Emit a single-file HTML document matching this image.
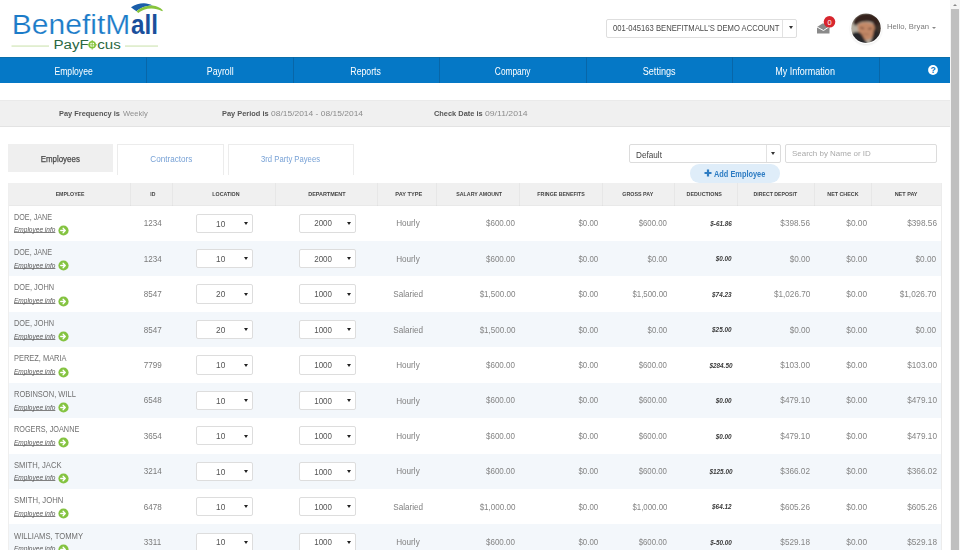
<!DOCTYPE html><html><head><meta charset="utf-8"><style>*{margin:0;padding:0;box-sizing:border-box}
html,body{width:960px;height:550px;overflow:hidden;background:#fff}
body{position:relative;font-family:"Liberation Sans",sans-serif;color:#666}
.t{position:absolute;width:0;height:0;display:flex;white-space:nowrap;line-height:1;z-index:10}
.t span{display:inline-block;flex:none}
.b{position:absolute}
#acct{position:absolute;left:605.5px;top:18.8px;width:191.5px;height:18.8px;border:1px solid #dedede;border-radius:2px;background:#fff}
#acct b{position:absolute;left:175.5px;top:0;width:1px;height:16.8px;background:#e2e2e2}
#acct i{position:absolute;left:182.5px;top:6.6px;width:0;height:0;border-left:2.2px solid transparent;border-right:2.2px solid transparent;border-top:3.2px solid #333}
#nav{position:absolute;left:0;top:56.5px;width:950px;height:26.6px;background:#0578c6;border-top:1.5px solid #0a6faa}
#nav .sp{position:absolute;top:-1px;width:1px;height:26.6px;background:#0866a8}
#pay{position:absolute;left:0;top:100px;width:950px;height:26.5px;background:#f0f0f0;border-top:1px solid #eaeaea;border-bottom:1px solid #e3e3e3}
.tabb{position:absolute;top:144px;height:27.9px}
.tabb.on{background:#efefef}
.tabb.off{border:1px solid #ececec;border-bottom:none;background:#fff;height:31px}
#dfltb{position:absolute;left:628.5px;top:144px;width:152.2px;height:19px;border:1px solid #dcdcdc;border-radius:2px;background:#fff}
#dfltb b{position:absolute;left:136.2px;top:0;width:1px;height:17px;background:#e2e2e2}
#dfltb i{position:absolute;left:141.8px;top:6.8px;border-left:2.2px solid transparent;border-right:2.2px solid transparent;border-top:3.2px solid #333}
#pill{position:absolute;left:689.7px;top:164.2px;width:90.6px;height:18.4px;border-radius:9.2px;background:#dfedf9}
#searchb{position:absolute;left:785.3px;top:144.2px;width:152.2px;height:18.6px;border:1px solid #dcdcdc;border-radius:2px;background:#fff}
.thead{position:absolute;left:8px;top:183px;width:933px;height:22.5px;background:#f0f0f0;border-bottom:1px solid #e9e9e9}
.row{position:absolute;left:8px;width:933px;background:#fff}
.row.alt{background:#f3f7fb}
.sel{position:absolute;width:57.3px;height:19.2px;border:1px solid #dddddd;border-radius:2px;background:#fff;z-index:3}
.sel i{position:absolute;left:46.8px;top:7.3px;border-left:2px solid transparent;border-right:2px solid transparent;border-top:3.2px solid #222}
.go{position:absolute;left:57.8px;z-index:4}
.vs{position:absolute;top:183px;width:1px;height:22.5px;background:rgba(0,0,0,0.035);z-index:2}
#tl{position:absolute;left:8px;top:183px;width:1px;height:367px;background:#efefef;z-index:2}
#tr{position:absolute;left:940.5px;top:183px;width:1px;height:367px;background:#ececec;z-index:2}
#sb{position:absolute;left:949.6px;top:0;width:10.4px;height:550px;background:#f4f4f4}
#sb .arr{position:absolute;left:3.3px;top:3.8px;border-left:2px solid transparent;border-right:2px solid transparent;border-bottom:2.2px solid #888}
#sb .thumb{position:absolute;left:1.3px;top:9px;width:8.2px;height:541px;background:#bfbfbf}
</style></head><body><svg class="b" style="left:0;top:0" width="170" height="56" viewBox="0 0 170 56">
<path d="M131 7.2 C135 4.5 140 3.2 144 3.3 C147 3.4 150 4.2 152.5 5.6 C146 5.6 140 8 136.5 11.2 C134.5 10 132.5 8.6 131 7.2 Z" fill="#1a5ea9"/>
<path d="M136.5 11.2 C141 7.3 147 5.6 152.5 5.6 C156.5 5.8 160 7.5 162.8 10.3 L162.3 11.2 C158.5 9.3 155 8.4 151.5 8.4 C146 8.4 141.5 10.3 138.2 13 Z" fill="#86c43c"/>
<text x="11.8" y="34.4" font-family="Liberation Sans" font-size="27.5" fill="#1b7bc8" stroke="#fff" stroke-width="0.2" textLength="118.5" lengthAdjust="spacingAndGlyphs">BenefitM</text>
<text x="131" y="34.4" font-family="Liberation Sans" font-weight="bold" font-size="27.5" fill="#1a4f9c" textLength="27" lengthAdjust="spacingAndGlyphs">all</text>
<rect x="11.5" y="45.6" width="37.5" height="0.9" fill="#c2dd9f"/>
<rect x="125" y="45.6" width="33" height="0.9" fill="#c2dd9f"/>
<text x="53.5" y="49" font-family="Liberation Sans" font-size="12.3" fill="#2b6742" textLength="67.3" lengthAdjust="spacingAndGlyphs">PayF&#160;&#160;cus</text>
<circle cx="92.2" cy="44.8" r="3" fill="none" stroke="#86c43c" stroke-width="1.6"/>
<path d="M92.2 40v9.6M87.4 44.8h9.6" stroke="#86c43c" stroke-width="0.9"/>
</svg>
<div id="acct"><b></b><i></i></div>
<svg class="b" style="left:815px;top:14px" width="24" height="22" viewBox="0 0 24 22">
<path d="M2 13 L7.5 9.5 L14.5 9.5 L14.5 19.5 L2 19.5 Z" fill="#8a8a8a"/>
<path d="M2 13 L8.5 16.5 L14.5 12.5" stroke="#fff" stroke-width="1" fill="none"/>
<circle cx="14.5" cy="7.8" r="5.8" fill="#d7262e"/>
<text x="14.5" y="10.6" font-family="Liberation Sans" font-size="7.5" fill="#fff" text-anchor="middle">0</text>
</svg>
<svg class="b" style="left:849px;top:11px" width="34" height="36" viewBox="0 0 34 36">
<defs><clipPath id="ac"><circle cx="17" cy="17.2" r="14.7"/></clipPath>
<filter id="sh" x="-30%" y="-30%" width="160%" height="160%"><feGaussianBlur stdDeviation="0.9"/></filter>
<filter id="bl" x="-10%" y="-10%" width="120%" height="120%"><feGaussianBlur stdDeviation="0.8"/></filter></defs>
<circle cx="17" cy="18.3" r="15.6" fill="#000" opacity="0.10" filter="url(#sh)"/>
<circle cx="17" cy="17.2" r="15.9" fill="#fff"/>
<g clip-path="url(#ac)"><g filter="url(#bl)">
<rect x="0" y="0" width="34" height="36" fill="#b4ada0"/>
<path d="M24 5 L34 5 L34 36 L24 36 Z" fill="#3c302c"/>
<path d="M4 12 C5 5 11 2 18 2 C25 2 29 5 30 10 L28.5 15 C25 11 19 9.5 13 11 C10 12 8 13.5 6.5 15 Z" fill="#35241c"/>
<path d="M8.5 14 C12 11 19 10.5 25 14 L26 19 C25.5 24 22.5 28.5 18 29 C13.5 28.5 10.5 24 9 19 Z" fill="#c28866"/>
<path d="M11 16.5 L15 17.6 M19 17.8 L23 17.4" stroke="#6a4434" stroke-width="1.2"/>
<path d="M14 22.5 C16 23.5 18 23.8 20 23" stroke="#9a6650" stroke-width="0.9" fill="none"/>
<path d="M1 36 L2 24 C5 20 9.5 20 12.5 23 C14.5 26 16 29.5 18 31.5 L20 36 Z" fill="#26252a"/>
<path d="M25 18 C28 20 31 23 33 27 L33 36 L18 36 C22 32 24 25 25 18 Z" fill="#2b2727"/>
</g></g>
</svg>
<div class="b" style="left:932.3px;top:27.2px;border-left:2.2px solid transparent;border-right:2.2px solid transparent;border-top:2.4px solid #888"></div>
<div id="nav">
<div class="sp" style="left:146px"></div>
<div class="sp" style="left:292.5px"></div>
<div class="sp" style="left:439px"></div>
<div class="sp" style="left:585.5px"></div>
<div class="sp" style="left:732px"></div>
<div class="sp" style="left:879px"></div>
<svg style="position:absolute;left:928.2px;top:7.4px" width="10" height="10" viewBox="0 0 10 10"><circle cx="5" cy="5" r="4.9" fill="#fff"/><text x="5.1" y="8.3" font-family="Liberation Sans" font-weight="bold" font-size="8.6" fill="#0578c6" text-anchor="middle">?</text></svg>
</div>
<div id="pay"></div>
<div class="tabb on" style="left:8px;width:105px"></div>
<div class="tabb off" style="left:117px;width:107px"></div>
<div class="tabb off" style="left:228px;width:125.5px"></div>
<div id="dfltb"><b></b><i></i></div>
<div id="pill"></div>
<svg class="b" style="left:703.5px;top:168.7px;z-index:11" width="8" height="8" viewBox="0 0 8 8"><path d="M4 0.5v7M0.5 4h7" stroke="#2d7cc3" stroke-width="2.2"/></svg>
<div id="searchb"></div>
<div class="thead"></div>
<div id="tl"></div><div id="tr"></div>
<div id="sb"><div class="arr"></div><div class="thumb"></div></div>
<div class="row" style="top:205.50px;height:35.64px"></div><div class="row alt" style="top:240.94px;height:35.64px"></div><div class="row" style="top:276.38px;height:35.64px"></div><div class="row alt" style="top:311.82px;height:35.64px"></div><div class="row" style="top:347.26px;height:35.64px"></div><div class="row alt" style="top:382.70px;height:35.64px"></div><div class="row" style="top:418.14px;height:35.64px"></div><div class="row alt" style="top:453.58px;height:35.64px"></div><div class="row" style="top:489.02px;height:35.64px"></div><div class="row alt" style="top:524.46px;height:35.64px"></div><div class="sel" style="left:196.2px;top:213.60px"><i></i></div><div class="sel" style="left:299.2px;top:213.60px"><i></i></div><svg class="go" style="top:224.80px" width="11" height="11" viewBox="0 0 22 22"><circle cx="11" cy="11" r="10.2" fill="#84c341"/><path d="M5.5 11h8.8M10.2 6.6l4.4 4.4-4.4 4.4" stroke="#fff" stroke-width="2.6" fill="none" stroke-linecap="round" stroke-linejoin="round"/></svg><div class="sel" style="left:196.2px;top:249.04px"><i></i></div><div class="sel" style="left:299.2px;top:249.04px"><i></i></div><svg class="go" style="top:260.24px" width="11" height="11" viewBox="0 0 22 22"><circle cx="11" cy="11" r="10.2" fill="#84c341"/><path d="M5.5 11h8.8M10.2 6.6l4.4 4.4-4.4 4.4" stroke="#fff" stroke-width="2.6" fill="none" stroke-linecap="round" stroke-linejoin="round"/></svg><div class="sel" style="left:196.2px;top:284.48px"><i></i></div><div class="sel" style="left:299.2px;top:284.48px"><i></i></div><svg class="go" style="top:295.68px" width="11" height="11" viewBox="0 0 22 22"><circle cx="11" cy="11" r="10.2" fill="#84c341"/><path d="M5.5 11h8.8M10.2 6.6l4.4 4.4-4.4 4.4" stroke="#fff" stroke-width="2.6" fill="none" stroke-linecap="round" stroke-linejoin="round"/></svg><div class="sel" style="left:196.2px;top:319.92px"><i></i></div><div class="sel" style="left:299.2px;top:319.92px"><i></i></div><svg class="go" style="top:331.12px" width="11" height="11" viewBox="0 0 22 22"><circle cx="11" cy="11" r="10.2" fill="#84c341"/><path d="M5.5 11h8.8M10.2 6.6l4.4 4.4-4.4 4.4" stroke="#fff" stroke-width="2.6" fill="none" stroke-linecap="round" stroke-linejoin="round"/></svg><div class="sel" style="left:196.2px;top:355.36px"><i></i></div><div class="sel" style="left:299.2px;top:355.36px"><i></i></div><svg class="go" style="top:366.56px" width="11" height="11" viewBox="0 0 22 22"><circle cx="11" cy="11" r="10.2" fill="#84c341"/><path d="M5.5 11h8.8M10.2 6.6l4.4 4.4-4.4 4.4" stroke="#fff" stroke-width="2.6" fill="none" stroke-linecap="round" stroke-linejoin="round"/></svg><div class="sel" style="left:196.2px;top:390.80px"><i></i></div><div class="sel" style="left:299.2px;top:390.80px"><i></i></div><svg class="go" style="top:402.00px" width="11" height="11" viewBox="0 0 22 22"><circle cx="11" cy="11" r="10.2" fill="#84c341"/><path d="M5.5 11h8.8M10.2 6.6l4.4 4.4-4.4 4.4" stroke="#fff" stroke-width="2.6" fill="none" stroke-linecap="round" stroke-linejoin="round"/></svg><div class="sel" style="left:196.2px;top:426.24px"><i></i></div><div class="sel" style="left:299.2px;top:426.24px"><i></i></div><svg class="go" style="top:437.44px" width="11" height="11" viewBox="0 0 22 22"><circle cx="11" cy="11" r="10.2" fill="#84c341"/><path d="M5.5 11h8.8M10.2 6.6l4.4 4.4-4.4 4.4" stroke="#fff" stroke-width="2.6" fill="none" stroke-linecap="round" stroke-linejoin="round"/></svg><div class="sel" style="left:196.2px;top:461.68px"><i></i></div><div class="sel" style="left:299.2px;top:461.68px"><i></i></div><svg class="go" style="top:472.88px" width="11" height="11" viewBox="0 0 22 22"><circle cx="11" cy="11" r="10.2" fill="#84c341"/><path d="M5.5 11h8.8M10.2 6.6l4.4 4.4-4.4 4.4" stroke="#fff" stroke-width="2.6" fill="none" stroke-linecap="round" stroke-linejoin="round"/></svg><div class="sel" style="left:196.2px;top:497.12px"><i></i></div><div class="sel" style="left:299.2px;top:497.12px"><i></i></div><svg class="go" style="top:508.32px" width="11" height="11" viewBox="0 0 22 22"><circle cx="11" cy="11" r="10.2" fill="#84c341"/><path d="M5.5 11h8.8M10.2 6.6l4.4 4.4-4.4 4.4" stroke="#fff" stroke-width="2.6" fill="none" stroke-linecap="round" stroke-linejoin="round"/></svg><div class="sel" style="left:196.2px;top:532.56px"><i></i></div><div class="sel" style="left:299.2px;top:532.56px"><i></i></div><svg class="go" style="top:543.76px" width="11" height="11" viewBox="0 0 22 22"><circle cx="11" cy="11" r="10.2" fill="#84c341"/><path d="M5.5 11h8.8M10.2 6.6l4.4 4.4-4.4 4.4" stroke="#fff" stroke-width="2.6" fill="none" stroke-linecap="round" stroke-linejoin="round"/></svg><div class="vs" style="left:129.5px"></div><div class="vs" style="left:172.0px"></div><div class="vs" style="left:274.5px"></div><div class="vs" style="left:377.0px"></div><div class="vs" style="left:435.5px"></div><div class="vs" style="left:518.5px"></div><div class="vs" style="left:602.0px"></div><div class="vs" style="left:673.5px"></div><div class="vs" style="left:736.5px"></div><div class="vs" style="left:813.5px"></div><div class="vs" style="left:870.5px"></div><div class="t" style="left:612.50px;top:24.20px;font-size:8.80px;color:#4a4a4a;justify-content:flex-start;"><span style="transform:scaleX(0.8696);transform-origin:left">001-045163 BENEFITMALL&#x27;S DEMO ACCOUNT</span></div><div class="t" style="left:887.42px;top:23.29px;font-size:7.90px;color:#7a7a7a;justify-content:flex-start;"><span style="transform:scaleX(0.9763);transform-origin:left">Hello, Bryan</span></div><div class="t" style="left:73.25px;top:65.64px;font-size:10.61px;color:#fff;justify-content:center;"><span style="transform:scaleX(0.8104);transform-origin:center">Employee</span></div><div class="t" style="left:219.90px;top:65.64px;font-size:10.61px;color:#fff;justify-content:center;"><span style="transform:scaleX(0.8293);transform-origin:center">Payroll</span></div><div class="t" style="left:365.90px;top:65.64px;font-size:10.61px;color:#fff;justify-content:center;"><span style="transform:scaleX(0.8189);transform-origin:center">Reports</span></div><div class="t" style="left:513.00px;top:65.64px;font-size:10.61px;color:#fff;justify-content:center;"><span style="transform:scaleX(0.7854);transform-origin:center">Company</span></div><div class="t" style="left:659.50px;top:65.64px;font-size:10.61px;color:#fff;justify-content:center;"><span style="transform:scaleX(0.8586);transform-origin:center">Settings</span></div><div class="t" style="left:805.50px;top:65.64px;font-size:10.61px;color:#fff;justify-content:center;"><span style="transform:scaleX(0.8498);transform-origin:center">My Information</span></div><div class="t" style="left:59.08px;top:109.68px;font-size:7.99px;color:#555;justify-content:flex-start;font-weight:bold;"><span style="transform:scaleX(0.9270);transform-origin:left">Pay Frequency is</span></div><div class="t" style="left:122.58px;top:109.75px;font-size:7.59px;color:#909090;justify-content:flex-start;"><span style="transform:scaleX(1.0049);transform-origin:left">Weekly</span></div><div class="t" style="left:221.92px;top:109.68px;font-size:7.99px;color:#555;justify-content:flex-start;font-weight:bold;"><span style="transform:scaleX(0.9285);transform-origin:left">Pay Period is</span></div><div class="t" style="left:270.58px;top:109.72px;font-size:7.77px;color:#8c8c8c;justify-content:flex-start;"><span style="transform:scaleX(1.0874);transform-origin:left">08/15/2014 - 08/15/2014</span></div><div class="t" style="left:433.96px;top:109.68px;font-size:7.99px;color:#555;justify-content:flex-start;font-weight:bold;"><span style="transform:scaleX(0.9275);transform-origin:left">Check Date is</span></div><div class="t" style="left:485.04px;top:109.72px;font-size:7.77px;color:#8c8c8c;justify-content:flex-start;"><span style="transform:scaleX(1.1118);transform-origin:left">09/11/2014</span></div><div class="t" style="left:60.62px;top:155.30px;font-size:9.01px;color:#4a4a4a;justify-content:center;-webkit-text-stroke:0.25px #4a4a4a;"><span style="transform:scaleX(0.8800);transform-origin:center">Employees</span></div><div class="t" style="left:170.87px;top:155.30px;font-size:9.01px;color:#78a2d6;justify-content:center;"><span style="transform:scaleX(0.9021);transform-origin:center">Contractors</span></div><div class="t" style="left:290.23px;top:155.30px;font-size:9.01px;color:#78a2d6;justify-content:center;"><span style="transform:scaleX(0.8541);transform-origin:center">3rd Party Payees</span></div><div class="t" style="left:635.92px;top:150.53px;font-size:8.43px;color:#444;justify-content:flex-start;"><span style="transform:scaleX(0.9714);transform-origin:left">Default</span></div><div class="t" style="left:714.08px;top:171.03px;font-size:8.28px;color:#2d7cc3;justify-content:flex-start;font-weight:bold;"><span style="transform:scaleX(0.8941);transform-origin:left">Add Employee</span></div><div class="t" style="left:791.78px;top:150.10px;font-size:8.00px;color:#aaa;justify-content:flex-start;"><span style="transform:scaleX(0.9958);transform-origin:left">Search by Name or ID</span></div><div class="t" style="left:70.19px;top:191.83px;font-size:5.81px;color:#444;justify-content:center;font-weight:bold;"><span style="transform:scaleX(0.8975);transform-origin:center">EMPLOYEE</span></div><div class="t" style="left:152.50px;top:191.83px;font-size:5.81px;color:#444;justify-content:center;font-weight:bold;"><span style="transform:scaleX(0.8800);transform-origin:center">ID</span></div><div class="t" style="left:225.53px;top:191.83px;font-size:5.81px;color:#444;justify-content:center;font-weight:bold;"><span style="transform:scaleX(0.9153);transform-origin:center">LOCATION</span></div><div class="t" style="left:327.23px;top:191.83px;font-size:5.81px;color:#444;justify-content:center;font-weight:bold;"><span style="transform:scaleX(0.9403);transform-origin:center">DEPARTMENT</span></div><div class="t" style="left:408.89px;top:191.83px;font-size:5.81px;color:#444;justify-content:center;font-weight:bold;"><span style="transform:scaleX(0.9736);transform-origin:center">PAY TYPE</span></div><div class="t" style="left:479.27px;top:191.83px;font-size:5.81px;color:#444;justify-content:center;font-weight:bold;"><span style="transform:scaleX(0.9088);transform-origin:center">SALARY AMOUNT</span></div><div class="t" style="left:561.58px;top:191.83px;font-size:5.81px;color:#444;justify-content:center;font-weight:bold;"><span style="transform:scaleX(0.9100);transform-origin:center">FRINGE BENEFITS</span></div><div class="t" style="left:637.96px;top:191.83px;font-size:5.81px;color:#444;justify-content:center;font-weight:bold;"><span style="transform:scaleX(0.9228);transform-origin:center">GROSS PAY</span></div><div class="t" style="left:704.42px;top:191.83px;font-size:5.81px;color:#444;justify-content:center;font-weight:bold;"><span style="transform:scaleX(0.9196);transform-origin:center">DEDUCTIONS</span></div><div class="t" style="left:775.39px;top:191.83px;font-size:5.81px;color:#444;justify-content:center;font-weight:bold;"><span style="transform:scaleX(0.8976);transform-origin:center">DIRECT DEPOSIT</span></div><div class="t" style="left:843.21px;top:191.83px;font-size:5.81px;color:#444;justify-content:center;font-weight:bold;"><span style="transform:scaleX(0.9254);transform-origin:center">NET CHECK</span></div><div class="t" style="left:906.15px;top:191.83px;font-size:5.81px;color:#444;justify-content:center;font-weight:bold;"><span style="transform:scaleX(0.9454);transform-origin:center">NET PAY</span></div><div class="t" style="left:14.00px;top:212.60px;font-size:8.72px;color:#707070;justify-content:flex-start;"><span style="transform:scaleX(0.8272);transform-origin:left">DOE, JANE</span></div><div class="t" style="left:152.92px;top:219.20px;font-size:8.85px;color:#7a7a7a;justify-content:center;"><span style="transform:scaleX(0.9132);transform-origin:center">1234</span></div><div class="t" style="left:220.90px;top:219.51px;font-size:8.33px;color:#555;justify-content:center;"><span style="transform:scaleX(0.9972);transform-origin:center">10</span></div><div class="t" style="left:323.12px;top:220.45px;font-size:8.19px;color:#555;justify-content:center;"><span style="transform:scaleX(0.9775);transform-origin:center">2000</span></div><div class="t" style="left:408.14px;top:220.36px;font-size:8.28px;color:#808080;justify-content:center;"><span style="transform:scaleX(0.9841);transform-origin:center">Hourly</span></div><div class="t" style="left:514.92px;top:219.20px;font-size:8.85px;color:#858585;justify-content:flex-end;"><span style="transform:scaleX(0.9077);transform-origin:right">$600.00</span></div><div class="t" style="left:598.00px;top:219.20px;font-size:8.85px;color:#858585;justify-content:flex-end;"><span style="transform:scaleX(0.8901);transform-origin:right">$0.00</span></div><div class="t" style="left:667.00px;top:219.20px;font-size:8.85px;color:#858585;justify-content:flex-end;"><span style="transform:scaleX(0.8862);transform-origin:right">$600.00</span></div><div class="t" style="left:732.04px;top:219.87px;font-size:7.06px;color:#3a3a3a;justify-content:flex-end;font-weight:bold;font-style:italic;"><span style="transform:scaleX(0.9046);transform-origin:right">$-61.86</span></div><div class="t" style="left:810.00px;top:219.20px;font-size:8.85px;color:#858585;justify-content:flex-end;"><span style="transform:scaleX(0.9260);transform-origin:right">$398.56</span></div><div class="t" style="left:867.00px;top:219.20px;font-size:8.85px;color:#858585;justify-content:flex-end;"><span style="transform:scaleX(0.9438);transform-origin:right">$0.00</span></div><div class="t" style="left:936.50px;top:219.20px;font-size:8.85px;color:#858585;justify-content:flex-end;"><span style="transform:scaleX(0.9320);transform-origin:right">$398.56</span></div><div class="t" style="left:13.60px;top:227.40px;font-size:6.90px;color:#5a5a5a;justify-content:flex-start;font-style:italic;text-decoration:underline;text-decoration-skip-ink:none;text-decoration-thickness:0.7px;text-decoration-color:#808080;text-underline-offset:0px;"><span style="transform:scaleX(0.9467);transform-origin:left">Employee info</span></div><div class="t" style="left:14.00px;top:248.04px;font-size:8.72px;color:#707070;justify-content:flex-start;"><span style="transform:scaleX(0.8272);transform-origin:left">DOE, JANE</span></div><div class="t" style="left:152.92px;top:254.64px;font-size:8.85px;color:#7a7a7a;justify-content:center;"><span style="transform:scaleX(0.9132);transform-origin:center">1234</span></div><div class="t" style="left:220.90px;top:254.95px;font-size:8.33px;color:#555;justify-content:center;"><span style="transform:scaleX(0.9972);transform-origin:center">10</span></div><div class="t" style="left:323.12px;top:255.89px;font-size:8.19px;color:#555;justify-content:center;"><span style="transform:scaleX(0.9775);transform-origin:center">2000</span></div><div class="t" style="left:408.14px;top:255.80px;font-size:8.28px;color:#808080;justify-content:center;"><span style="transform:scaleX(0.9841);transform-origin:center">Hourly</span></div><div class="t" style="left:514.92px;top:254.64px;font-size:8.85px;color:#858585;justify-content:flex-end;"><span style="transform:scaleX(0.9077);transform-origin:right">$600.00</span></div><div class="t" style="left:598.00px;top:254.64px;font-size:8.85px;color:#858585;justify-content:flex-end;"><span style="transform:scaleX(0.8901);transform-origin:right">$0.00</span></div><div class="t" style="left:667.00px;top:254.64px;font-size:8.85px;color:#858585;justify-content:flex-end;"><span style="transform:scaleX(0.8862);transform-origin:right">$0.00</span></div><div class="t" style="left:732.04px;top:255.31px;font-size:7.06px;color:#3a3a3a;justify-content:flex-end;font-weight:bold;font-style:italic;"><span style="transform:scaleX(0.9046);transform-origin:right">$0.00</span></div><div class="t" style="left:810.00px;top:254.64px;font-size:8.85px;color:#858585;justify-content:flex-end;"><span style="transform:scaleX(0.9260);transform-origin:right">$0.00</span></div><div class="t" style="left:867.00px;top:254.64px;font-size:8.85px;color:#858585;justify-content:flex-end;"><span style="transform:scaleX(0.9438);transform-origin:right">$0.00</span></div><div class="t" style="left:936.50px;top:254.64px;font-size:8.85px;color:#858585;justify-content:flex-end;"><span style="transform:scaleX(0.9320);transform-origin:right">$0.00</span></div><div class="t" style="left:13.60px;top:262.84px;font-size:6.90px;color:#5a5a5a;justify-content:flex-start;font-style:italic;text-decoration:underline;text-decoration-skip-ink:none;text-decoration-thickness:0.7px;text-decoration-color:#808080;text-underline-offset:0px;"><span style="transform:scaleX(0.9467);transform-origin:left">Employee info</span></div><div class="t" style="left:14.00px;top:283.48px;font-size:8.72px;color:#707070;justify-content:flex-start;"><span style="transform:scaleX(0.8456);transform-origin:left">DOE, JOHN</span></div><div class="t" style="left:152.92px;top:290.08px;font-size:8.85px;color:#7a7a7a;justify-content:center;"><span style="transform:scaleX(0.9132);transform-origin:center">8547</span></div><div class="t" style="left:220.90px;top:290.39px;font-size:8.33px;color:#555;justify-content:center;"><span style="transform:scaleX(0.9972);transform-origin:center">20</span></div><div class="t" style="left:323.12px;top:291.33px;font-size:8.19px;color:#555;justify-content:center;"><span style="transform:scaleX(0.9775);transform-origin:center">1000</span></div><div class="t" style="left:408.14px;top:291.24px;font-size:8.28px;color:#808080;justify-content:center;"><span style="transform:scaleX(0.9841);transform-origin:center">Salaried</span></div><div class="t" style="left:514.92px;top:290.08px;font-size:8.85px;color:#858585;justify-content:flex-end;"><span style="transform:scaleX(0.9077);transform-origin:right">$1,500.00</span></div><div class="t" style="left:598.00px;top:290.08px;font-size:8.85px;color:#858585;justify-content:flex-end;"><span style="transform:scaleX(0.8901);transform-origin:right">$0.00</span></div><div class="t" style="left:667.00px;top:290.08px;font-size:8.85px;color:#858585;justify-content:flex-end;"><span style="transform:scaleX(0.8862);transform-origin:right">$1,500.00</span></div><div class="t" style="left:732.04px;top:290.75px;font-size:7.06px;color:#3a3a3a;justify-content:flex-end;font-weight:bold;font-style:italic;"><span style="transform:scaleX(0.9046);transform-origin:right">$74.23</span></div><div class="t" style="left:810.00px;top:290.08px;font-size:8.85px;color:#858585;justify-content:flex-end;"><span style="transform:scaleX(0.9260);transform-origin:right">$1,026.70</span></div><div class="t" style="left:867.00px;top:290.08px;font-size:8.85px;color:#858585;justify-content:flex-end;"><span style="transform:scaleX(0.9438);transform-origin:right">$0.00</span></div><div class="t" style="left:936.50px;top:290.08px;font-size:8.85px;color:#858585;justify-content:flex-end;"><span style="transform:scaleX(0.9320);transform-origin:right">$1,026.70</span></div><div class="t" style="left:13.60px;top:298.28px;font-size:6.90px;color:#5a5a5a;justify-content:flex-start;font-style:italic;text-decoration:underline;text-decoration-skip-ink:none;text-decoration-thickness:0.7px;text-decoration-color:#808080;text-underline-offset:0px;"><span style="transform:scaleX(0.9467);transform-origin:left">Employee info</span></div><div class="t" style="left:14.00px;top:318.92px;font-size:8.72px;color:#707070;justify-content:flex-start;"><span style="transform:scaleX(0.8456);transform-origin:left">DOE, JOHN</span></div><div class="t" style="left:152.92px;top:325.52px;font-size:8.85px;color:#7a7a7a;justify-content:center;"><span style="transform:scaleX(0.9132);transform-origin:center">8547</span></div><div class="t" style="left:220.90px;top:325.83px;font-size:8.33px;color:#555;justify-content:center;"><span style="transform:scaleX(0.9972);transform-origin:center">20</span></div><div class="t" style="left:323.12px;top:326.77px;font-size:8.19px;color:#555;justify-content:center;"><span style="transform:scaleX(0.9775);transform-origin:center">1000</span></div><div class="t" style="left:408.14px;top:326.68px;font-size:8.28px;color:#808080;justify-content:center;"><span style="transform:scaleX(0.9841);transform-origin:center">Salaried</span></div><div class="t" style="left:514.92px;top:325.52px;font-size:8.85px;color:#858585;justify-content:flex-end;"><span style="transform:scaleX(0.9077);transform-origin:right">$1,500.00</span></div><div class="t" style="left:598.00px;top:325.52px;font-size:8.85px;color:#858585;justify-content:flex-end;"><span style="transform:scaleX(0.8901);transform-origin:right">$0.00</span></div><div class="t" style="left:667.00px;top:325.52px;font-size:8.85px;color:#858585;justify-content:flex-end;"><span style="transform:scaleX(0.8862);transform-origin:right">$0.00</span></div><div class="t" style="left:732.04px;top:326.19px;font-size:7.06px;color:#3a3a3a;justify-content:flex-end;font-weight:bold;font-style:italic;"><span style="transform:scaleX(0.9046);transform-origin:right">$25.00</span></div><div class="t" style="left:810.00px;top:325.52px;font-size:8.85px;color:#858585;justify-content:flex-end;"><span style="transform:scaleX(0.9260);transform-origin:right">$0.00</span></div><div class="t" style="left:867.00px;top:325.52px;font-size:8.85px;color:#858585;justify-content:flex-end;"><span style="transform:scaleX(0.9438);transform-origin:right">$0.00</span></div><div class="t" style="left:936.50px;top:325.52px;font-size:8.85px;color:#858585;justify-content:flex-end;"><span style="transform:scaleX(0.9320);transform-origin:right">$0.00</span></div><div class="t" style="left:13.60px;top:333.72px;font-size:6.90px;color:#5a5a5a;justify-content:flex-start;font-style:italic;text-decoration:underline;text-decoration-skip-ink:none;text-decoration-thickness:0.7px;text-decoration-color:#808080;text-underline-offset:0px;"><span style="transform:scaleX(0.9467);transform-origin:left">Employee info</span></div><div class="t" style="left:14.00px;top:354.36px;font-size:8.72px;color:#707070;justify-content:flex-start;"><span style="transform:scaleX(0.8534);transform-origin:left">PEREZ, MARIA</span></div><div class="t" style="left:152.92px;top:360.96px;font-size:8.85px;color:#7a7a7a;justify-content:center;"><span style="transform:scaleX(0.9132);transform-origin:center">7799</span></div><div class="t" style="left:220.90px;top:361.27px;font-size:8.33px;color:#555;justify-content:center;"><span style="transform:scaleX(0.9972);transform-origin:center">10</span></div><div class="t" style="left:323.12px;top:362.21px;font-size:8.19px;color:#555;justify-content:center;"><span style="transform:scaleX(0.9775);transform-origin:center">1000</span></div><div class="t" style="left:408.14px;top:362.12px;font-size:8.28px;color:#808080;justify-content:center;"><span style="transform:scaleX(0.9841);transform-origin:center">Hourly</span></div><div class="t" style="left:514.92px;top:360.96px;font-size:8.85px;color:#858585;justify-content:flex-end;"><span style="transform:scaleX(0.9077);transform-origin:right">$600.00</span></div><div class="t" style="left:598.00px;top:360.96px;font-size:8.85px;color:#858585;justify-content:flex-end;"><span style="transform:scaleX(0.8901);transform-origin:right">$0.00</span></div><div class="t" style="left:667.00px;top:360.96px;font-size:8.85px;color:#858585;justify-content:flex-end;"><span style="transform:scaleX(0.8862);transform-origin:right">$600.00</span></div><div class="t" style="left:732.04px;top:361.63px;font-size:7.06px;color:#3a3a3a;justify-content:flex-end;font-weight:bold;font-style:italic;"><span style="transform:scaleX(0.9046);transform-origin:right">$284.50</span></div><div class="t" style="left:810.00px;top:360.96px;font-size:8.85px;color:#858585;justify-content:flex-end;"><span style="transform:scaleX(0.9260);transform-origin:right">$103.00</span></div><div class="t" style="left:867.00px;top:360.96px;font-size:8.85px;color:#858585;justify-content:flex-end;"><span style="transform:scaleX(0.9438);transform-origin:right">$0.00</span></div><div class="t" style="left:936.50px;top:360.96px;font-size:8.85px;color:#858585;justify-content:flex-end;"><span style="transform:scaleX(0.9320);transform-origin:right">$103.00</span></div><div class="t" style="left:13.60px;top:369.16px;font-size:6.90px;color:#5a5a5a;justify-content:flex-start;font-style:italic;text-decoration:underline;text-decoration-skip-ink:none;text-decoration-thickness:0.7px;text-decoration-color:#808080;text-underline-offset:0px;"><span style="transform:scaleX(0.9467);transform-origin:left">Employee info</span></div><div class="t" style="left:14.00px;top:389.80px;font-size:8.72px;color:#707070;justify-content:flex-start;"><span style="transform:scaleX(0.8634);transform-origin:left">ROBINSON, WILL</span></div><div class="t" style="left:152.92px;top:396.40px;font-size:8.85px;color:#7a7a7a;justify-content:center;"><span style="transform:scaleX(0.9132);transform-origin:center">6548</span></div><div class="t" style="left:220.90px;top:396.71px;font-size:8.33px;color:#555;justify-content:center;"><span style="transform:scaleX(0.9972);transform-origin:center">10</span></div><div class="t" style="left:323.12px;top:397.65px;font-size:8.19px;color:#555;justify-content:center;"><span style="transform:scaleX(0.9775);transform-origin:center">1000</span></div><div class="t" style="left:408.14px;top:397.56px;font-size:8.28px;color:#808080;justify-content:center;"><span style="transform:scaleX(0.9841);transform-origin:center">Hourly</span></div><div class="t" style="left:514.92px;top:396.40px;font-size:8.85px;color:#858585;justify-content:flex-end;"><span style="transform:scaleX(0.9077);transform-origin:right">$600.00</span></div><div class="t" style="left:598.00px;top:396.40px;font-size:8.85px;color:#858585;justify-content:flex-end;"><span style="transform:scaleX(0.8901);transform-origin:right">$0.00</span></div><div class="t" style="left:667.00px;top:396.40px;font-size:8.85px;color:#858585;justify-content:flex-end;"><span style="transform:scaleX(0.8862);transform-origin:right">$600.00</span></div><div class="t" style="left:732.04px;top:397.07px;font-size:7.06px;color:#3a3a3a;justify-content:flex-end;font-weight:bold;font-style:italic;"><span style="transform:scaleX(0.9046);transform-origin:right">$0.00</span></div><div class="t" style="left:810.00px;top:396.40px;font-size:8.85px;color:#858585;justify-content:flex-end;"><span style="transform:scaleX(0.9260);transform-origin:right">$479.10</span></div><div class="t" style="left:867.00px;top:396.40px;font-size:8.85px;color:#858585;justify-content:flex-end;"><span style="transform:scaleX(0.9438);transform-origin:right">$0.00</span></div><div class="t" style="left:936.50px;top:396.40px;font-size:8.85px;color:#858585;justify-content:flex-end;"><span style="transform:scaleX(0.9320);transform-origin:right">$479.10</span></div><div class="t" style="left:13.60px;top:404.60px;font-size:6.90px;color:#5a5a5a;justify-content:flex-start;font-style:italic;text-decoration:underline;text-decoration-skip-ink:none;text-decoration-thickness:0.7px;text-decoration-color:#808080;text-underline-offset:0px;"><span style="transform:scaleX(0.9467);transform-origin:left">Employee info</span></div><div class="t" style="left:14.00px;top:425.24px;font-size:8.72px;color:#707070;justify-content:flex-start;"><span style="transform:scaleX(0.8369);transform-origin:left">ROGERS, JOANNE</span></div><div class="t" style="left:152.92px;top:431.84px;font-size:8.85px;color:#7a7a7a;justify-content:center;"><span style="transform:scaleX(0.9132);transform-origin:center">3654</span></div><div class="t" style="left:220.90px;top:432.15px;font-size:8.33px;color:#555;justify-content:center;"><span style="transform:scaleX(0.9972);transform-origin:center">10</span></div><div class="t" style="left:323.12px;top:433.09px;font-size:8.19px;color:#555;justify-content:center;"><span style="transform:scaleX(0.9775);transform-origin:center">1000</span></div><div class="t" style="left:408.14px;top:433.00px;font-size:8.28px;color:#808080;justify-content:center;"><span style="transform:scaleX(0.9841);transform-origin:center">Hourly</span></div><div class="t" style="left:514.92px;top:431.84px;font-size:8.85px;color:#858585;justify-content:flex-end;"><span style="transform:scaleX(0.9077);transform-origin:right">$600.00</span></div><div class="t" style="left:598.00px;top:431.84px;font-size:8.85px;color:#858585;justify-content:flex-end;"><span style="transform:scaleX(0.8901);transform-origin:right">$0.00</span></div><div class="t" style="left:667.00px;top:431.84px;font-size:8.85px;color:#858585;justify-content:flex-end;"><span style="transform:scaleX(0.8862);transform-origin:right">$600.00</span></div><div class="t" style="left:732.04px;top:432.51px;font-size:7.06px;color:#3a3a3a;justify-content:flex-end;font-weight:bold;font-style:italic;"><span style="transform:scaleX(0.9046);transform-origin:right">$0.00</span></div><div class="t" style="left:810.00px;top:431.84px;font-size:8.85px;color:#858585;justify-content:flex-end;"><span style="transform:scaleX(0.9260);transform-origin:right">$479.10</span></div><div class="t" style="left:867.00px;top:431.84px;font-size:8.85px;color:#858585;justify-content:flex-end;"><span style="transform:scaleX(0.9438);transform-origin:right">$0.00</span></div><div class="t" style="left:936.50px;top:431.84px;font-size:8.85px;color:#858585;justify-content:flex-end;"><span style="transform:scaleX(0.9320);transform-origin:right">$479.10</span></div><div class="t" style="left:13.60px;top:440.04px;font-size:6.90px;color:#5a5a5a;justify-content:flex-start;font-style:italic;text-decoration:underline;text-decoration-skip-ink:none;text-decoration-thickness:0.7px;text-decoration-color:#808080;text-underline-offset:0px;"><span style="transform:scaleX(0.9467);transform-origin:left">Employee info</span></div><div class="t" style="left:14.00px;top:460.68px;font-size:8.72px;color:#707070;justify-content:flex-start;"><span style="transform:scaleX(0.8770);transform-origin:left">SMITH, JACK</span></div><div class="t" style="left:152.92px;top:467.28px;font-size:8.85px;color:#7a7a7a;justify-content:center;"><span style="transform:scaleX(0.9132);transform-origin:center">3214</span></div><div class="t" style="left:220.90px;top:467.59px;font-size:8.33px;color:#555;justify-content:center;"><span style="transform:scaleX(0.9972);transform-origin:center">10</span></div><div class="t" style="left:323.12px;top:468.53px;font-size:8.19px;color:#555;justify-content:center;"><span style="transform:scaleX(0.9775);transform-origin:center">1000</span></div><div class="t" style="left:408.14px;top:468.44px;font-size:8.28px;color:#808080;justify-content:center;"><span style="transform:scaleX(0.9841);transform-origin:center">Hourly</span></div><div class="t" style="left:514.92px;top:467.28px;font-size:8.85px;color:#858585;justify-content:flex-end;"><span style="transform:scaleX(0.9077);transform-origin:right">$600.00</span></div><div class="t" style="left:598.00px;top:467.28px;font-size:8.85px;color:#858585;justify-content:flex-end;"><span style="transform:scaleX(0.8901);transform-origin:right">$0.00</span></div><div class="t" style="left:667.00px;top:467.28px;font-size:8.85px;color:#858585;justify-content:flex-end;"><span style="transform:scaleX(0.8862);transform-origin:right">$600.00</span></div><div class="t" style="left:732.04px;top:467.95px;font-size:7.06px;color:#3a3a3a;justify-content:flex-end;font-weight:bold;font-style:italic;"><span style="transform:scaleX(0.9046);transform-origin:right">$125.00</span></div><div class="t" style="left:810.00px;top:467.28px;font-size:8.85px;color:#858585;justify-content:flex-end;"><span style="transform:scaleX(0.9260);transform-origin:right">$366.02</span></div><div class="t" style="left:867.00px;top:467.28px;font-size:8.85px;color:#858585;justify-content:flex-end;"><span style="transform:scaleX(0.9438);transform-origin:right">$0.00</span></div><div class="t" style="left:936.50px;top:467.28px;font-size:8.85px;color:#858585;justify-content:flex-end;"><span style="transform:scaleX(0.9320);transform-origin:right">$366.02</span></div><div class="t" style="left:13.60px;top:475.48px;font-size:6.90px;color:#5a5a5a;justify-content:flex-start;font-style:italic;text-decoration:underline;text-decoration-skip-ink:none;text-decoration-thickness:0.7px;text-decoration-color:#808080;text-underline-offset:0px;"><span style="transform:scaleX(0.9467);transform-origin:left">Employee info</span></div><div class="t" style="left:14.00px;top:496.12px;font-size:8.72px;color:#707070;justify-content:flex-start;"><span style="transform:scaleX(0.8846);transform-origin:left">SMITH, JOHN</span></div><div class="t" style="left:152.92px;top:502.72px;font-size:8.85px;color:#7a7a7a;justify-content:center;"><span style="transform:scaleX(0.9132);transform-origin:center">6478</span></div><div class="t" style="left:220.90px;top:503.03px;font-size:8.33px;color:#555;justify-content:center;"><span style="transform:scaleX(0.9972);transform-origin:center">10</span></div><div class="t" style="left:323.12px;top:503.97px;font-size:8.19px;color:#555;justify-content:center;"><span style="transform:scaleX(0.9775);transform-origin:center">1000</span></div><div class="t" style="left:408.14px;top:503.88px;font-size:8.28px;color:#808080;justify-content:center;"><span style="transform:scaleX(0.9841);transform-origin:center">Salaried</span></div><div class="t" style="left:514.92px;top:502.72px;font-size:8.85px;color:#858585;justify-content:flex-end;"><span style="transform:scaleX(0.9077);transform-origin:right">$1,000.00</span></div><div class="t" style="left:598.00px;top:502.72px;font-size:8.85px;color:#858585;justify-content:flex-end;"><span style="transform:scaleX(0.8901);transform-origin:right">$0.00</span></div><div class="t" style="left:667.00px;top:502.72px;font-size:8.85px;color:#858585;justify-content:flex-end;"><span style="transform:scaleX(0.8862);transform-origin:right">$1,000.00</span></div><div class="t" style="left:732.04px;top:503.39px;font-size:7.06px;color:#3a3a3a;justify-content:flex-end;font-weight:bold;font-style:italic;"><span style="transform:scaleX(0.9046);transform-origin:right">$64.12</span></div><div class="t" style="left:810.00px;top:502.72px;font-size:8.85px;color:#858585;justify-content:flex-end;"><span style="transform:scaleX(0.9260);transform-origin:right">$605.26</span></div><div class="t" style="left:867.00px;top:502.72px;font-size:8.85px;color:#858585;justify-content:flex-end;"><span style="transform:scaleX(0.9438);transform-origin:right">$0.00</span></div><div class="t" style="left:936.50px;top:502.72px;font-size:8.85px;color:#858585;justify-content:flex-end;"><span style="transform:scaleX(0.9320);transform-origin:right">$605.26</span></div><div class="t" style="left:13.60px;top:510.92px;font-size:6.90px;color:#5a5a5a;justify-content:flex-start;font-style:italic;text-decoration:underline;text-decoration-skip-ink:none;text-decoration-thickness:0.7px;text-decoration-color:#808080;text-underline-offset:0px;"><span style="transform:scaleX(0.9467);transform-origin:left">Employee info</span></div><div class="t" style="left:14.00px;top:531.56px;font-size:8.72px;color:#707070;justify-content:flex-start;"><span style="transform:scaleX(0.8779);transform-origin:left">WILLIAMS, TOMMY</span></div><div class="t" style="left:152.92px;top:538.16px;font-size:8.85px;color:#7a7a7a;justify-content:center;"><span style="transform:scaleX(0.9132);transform-origin:center">3311</span></div><div class="t" style="left:220.90px;top:538.47px;font-size:8.33px;color:#555;justify-content:center;"><span style="transform:scaleX(0.9972);transform-origin:center">10</span></div><div class="t" style="left:323.12px;top:539.41px;font-size:8.19px;color:#555;justify-content:center;"><span style="transform:scaleX(0.9775);transform-origin:center">1000</span></div><div class="t" style="left:408.14px;top:539.32px;font-size:8.28px;color:#808080;justify-content:center;"><span style="transform:scaleX(0.9841);transform-origin:center">Hourly</span></div><div class="t" style="left:514.92px;top:538.16px;font-size:8.85px;color:#858585;justify-content:flex-end;"><span style="transform:scaleX(0.9077);transform-origin:right">$600.00</span></div><div class="t" style="left:598.00px;top:538.16px;font-size:8.85px;color:#858585;justify-content:flex-end;"><span style="transform:scaleX(0.8901);transform-origin:right">$0.00</span></div><div class="t" style="left:667.00px;top:538.16px;font-size:8.85px;color:#858585;justify-content:flex-end;"><span style="transform:scaleX(0.8862);transform-origin:right">$600.00</span></div><div class="t" style="left:732.04px;top:538.83px;font-size:7.06px;color:#3a3a3a;justify-content:flex-end;font-weight:bold;font-style:italic;"><span style="transform:scaleX(0.9046);transform-origin:right">$-50.00</span></div><div class="t" style="left:810.00px;top:538.16px;font-size:8.85px;color:#858585;justify-content:flex-end;"><span style="transform:scaleX(0.9260);transform-origin:right">$529.18</span></div><div class="t" style="left:867.00px;top:538.16px;font-size:8.85px;color:#858585;justify-content:flex-end;"><span style="transform:scaleX(0.9438);transform-origin:right">$0.00</span></div><div class="t" style="left:936.50px;top:538.16px;font-size:8.85px;color:#858585;justify-content:flex-end;"><span style="transform:scaleX(0.9320);transform-origin:right">$529.18</span></div><div class="t" style="left:13.60px;top:546.36px;font-size:6.90px;color:#5a5a5a;justify-content:flex-start;font-style:italic;text-decoration:underline;text-decoration-skip-ink:none;text-decoration-thickness:0.7px;text-decoration-color:#808080;text-underline-offset:0px;"><span style="transform:scaleX(0.9467);transform-origin:left">Employee info</span></div></body></html>
